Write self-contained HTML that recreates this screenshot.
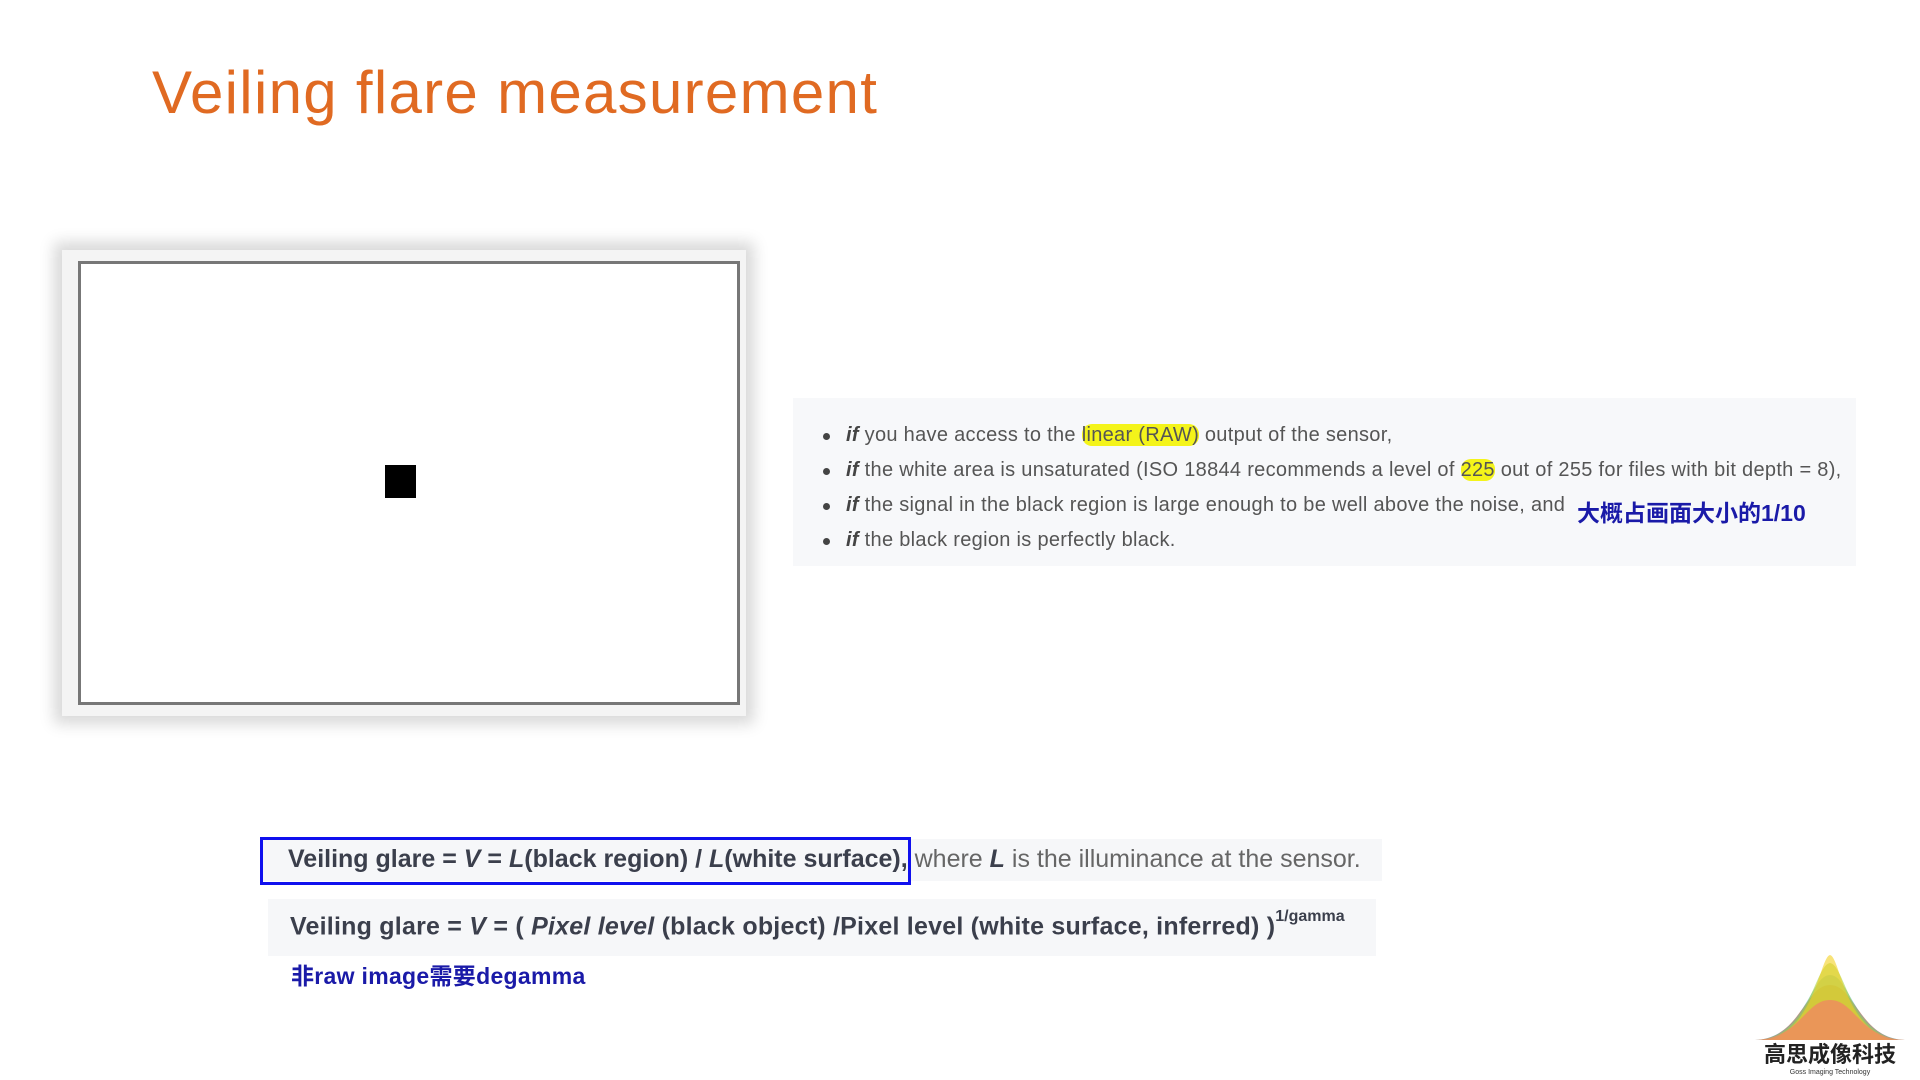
<!DOCTYPE html>
<html><head><meta charset="utf-8"><style>
body{margin:0;width:1920px;height:1080px;background:#fff;position:relative;overflow:hidden;font-family:"Liberation Sans","Noto Sans CJK SC",sans-serif}
.a{position:absolute;white-space:nowrap}
#title{left:152px;top:58px;font-size:60px;color:#e06a22;letter-spacing:1.3px}
#shadow{left:62px;top:250px;width:684px;height:466px;box-shadow:0 0 14px 8px #d9d9d9;background:#f4f4f4}
#frame{left:78px;top:261px;width:656px;height:438px;border:3px solid #777;background:#fff}
#sq{left:385px;top:465px;width:31px;height:33px;background:#000}
#panel{left:793px;top:398px;width:1063px;height:168px;background:#f7f8fa}
.li{font-size:20px;color:#555;letter-spacing:0.3px}
.li i{font-weight:bold;color:#444}
.dot{position:absolute;width:7px;height:7px;border-radius:50%;background:#444}
.hl{background:#f4f41a;border-radius:10px}
.cn{color:#1a1aa8;font-weight:bold}
.f{font-size:25px;font-weight:bold;color:#3b3f4c}
</style></head><body>
<div class="a" id="title">Veiling flare measurement</div>
<div class="a" id="shadow"></div>
<div class="a" id="frame"></div>
<div class="a" id="sq"></div>
<div class="a" id="panel"></div>
<div class="dot" style="left:823px;top:433px"></div>
<div class="dot" style="left:823px;top:468px"></div>
<div class="dot" style="left:823px;top:503px"></div>
<div class="dot" style="left:823px;top:538px"></div>
<div class="a li" style="left:846px;top:424px"><i>if</i> you have access to the <span class="hl">linear (RAW)</span> output of the sensor,</div>
<div class="a li" style="left:846px;top:459px"><i>if</i> the white area is unsaturated (ISO 18844 recommends a level of <span class="hl">225</span> out of 255 for files with bit depth = 8),</div>
<div class="a li" style="left:846px;top:494px"><i>if</i> the signal in the black region is large enough to be well above the noise, and</div>
<div class="a cn" style="left:1577px;top:494px;font-size:23px">大概占画面大小的1/10</div>
<div class="a li" style="left:846px;top:529px"><i>if</i> the black region is perfectly black.</div>

<div class="a" style="left:262px;top:839px;width:1120px;height:42px;background:#f6f7f9"></div>
<div class="a" style="left:260px;top:837px;width:645px;height:42px;border:3px solid #1010ee"></div>
<div class="a f" style="left:288px;top:845px;letter-spacing:0px">Veiling glare = <i>V</i> = <i>L</i>(black region) / <i>L</i>(white surface), <span style="font-weight:normal;color:#666">where <b style="color:#3b3f4c"><i>L</i></b> is the illuminance at the sensor.</span></div>

<div class="a" style="left:268px;top:899px;width:1108px;height:57px;background:#f6f7f9"></div>
<div class="a f" style="left:290px;top:912px;letter-spacing:0.22px">Veiling glare = <i>V</i> = ( <i>Pixel level</i> (black object) /Pixel level (white surface, inferred) )<sup style="font-size:16px;position:relative;top:-4px;letter-spacing:0">1/gamma</sup></div>
<div class="a cn" style="left:291px;top:957px;font-size:23px;letter-spacing:0.3px">非raw image需要degamma</div>

<svg class="a" style="left:1750px;top:955px" width="160" height="125" viewBox="0 0 160 125">
<path d="M5 85 C50 84 55 30 80 30 C105 30 110 84 155 85Z" fill="#f08a60" opacity="0.9"/>
<path d="M5 85 C55 83 60 20 80 20 C100 20 105 83 155 85Z" fill="#40b0c0" opacity="0.5"/>
<path d="M10 85 C60 80 65 10 80 8 C95 10 100 80 150 85Z" fill="#a8d040" opacity="0.6"/>
<path d="M20 85 C66 70 70 2 80 0 C90 2 94 70 140 85Z" fill="#f4d020" opacity="0.6"/>
<path d="M5 85 C50 84 55 45 80 45 C105 45 110 84 155 85Z" fill="#f08a60" opacity="0.8"/>
<text x="80" y="107" text-anchor="middle" font-size="22" font-weight="bold" fill="#222" font-family="Noto Sans CJK SC,sans-serif">高思成像科技</text>
<text x="80" y="119" text-anchor="middle" font-size="7" fill="#333" font-family="Liberation Sans,sans-serif">Goss Imaging Technology</text>
</svg>
</body></html>
